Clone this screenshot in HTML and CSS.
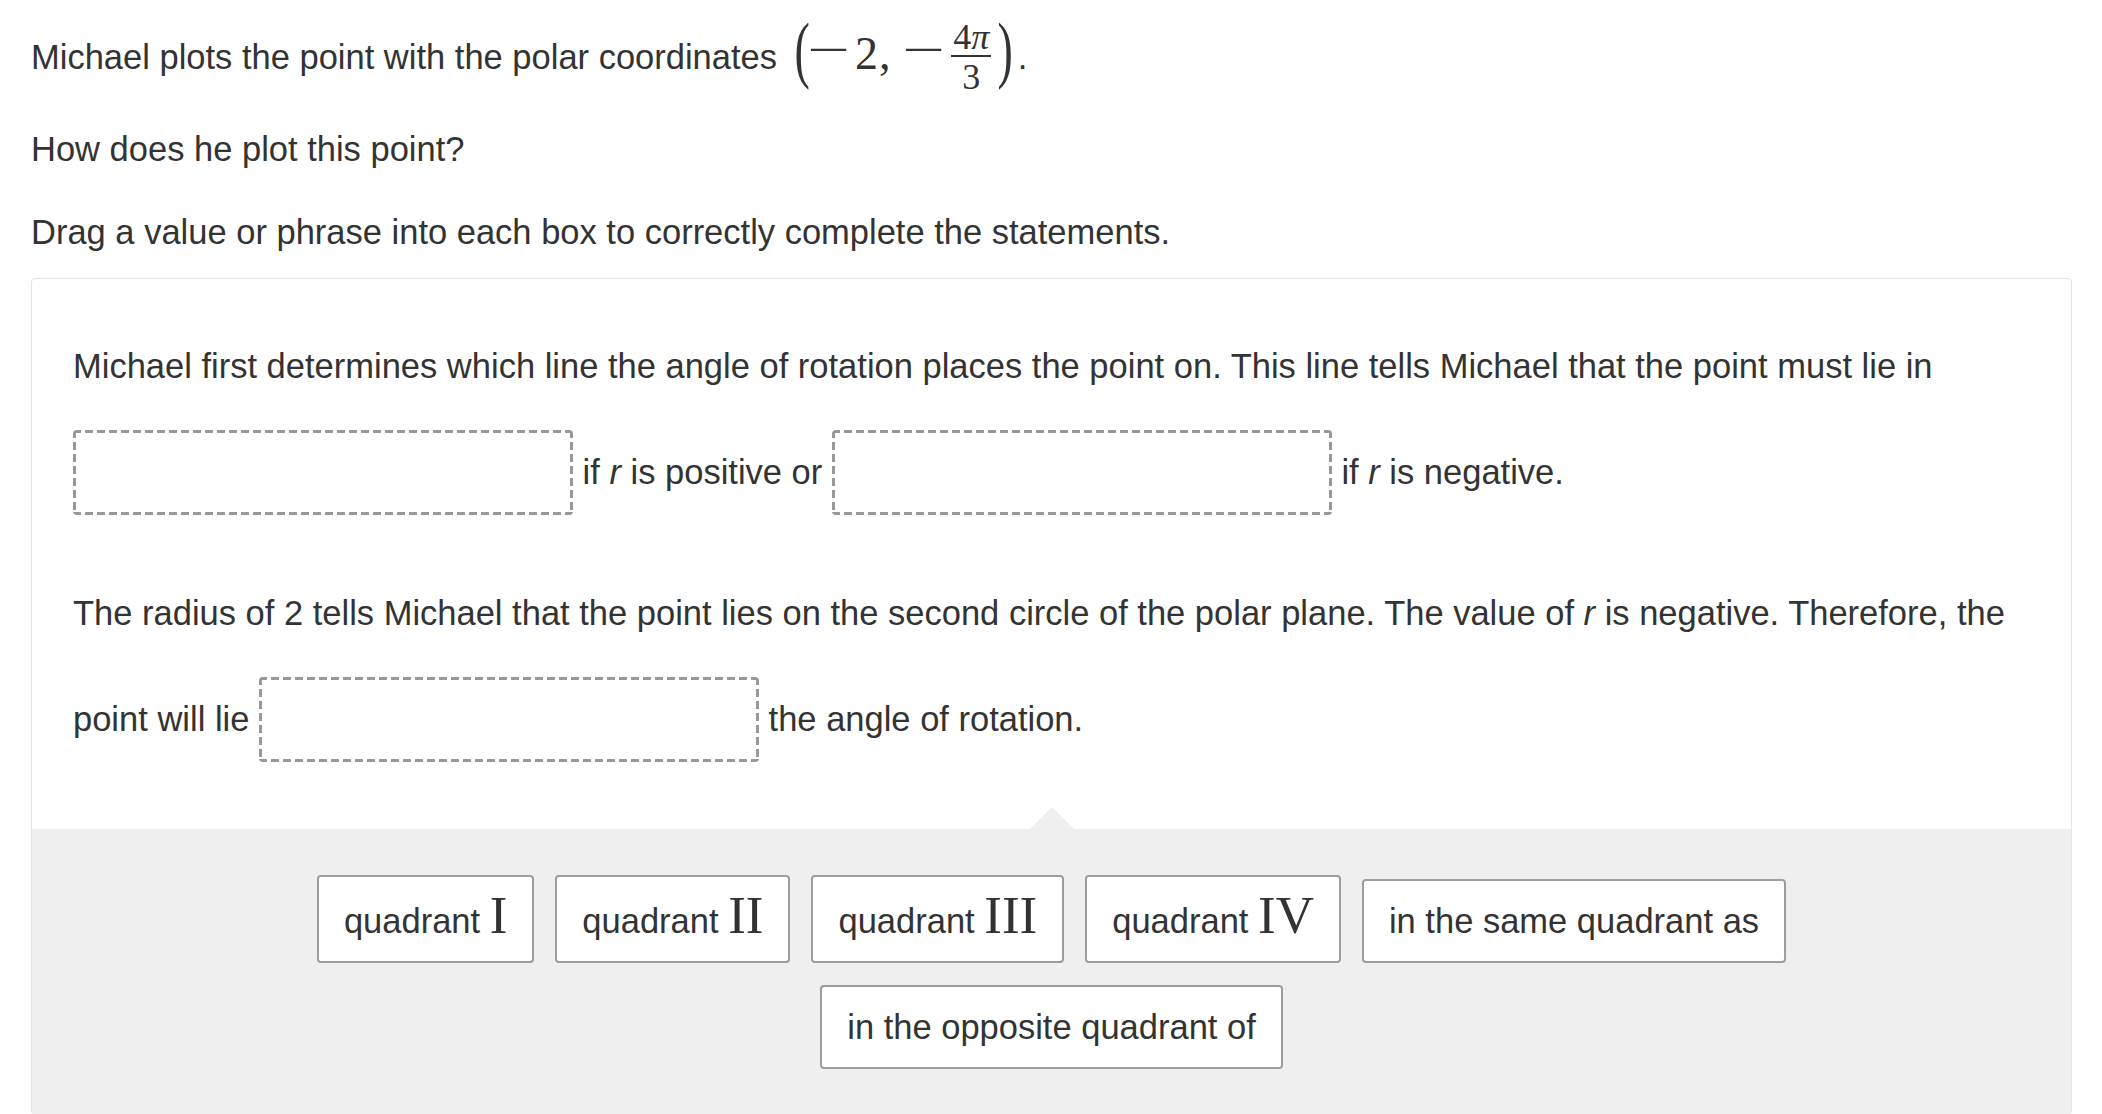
FILE: index.html
```html
<!DOCTYPE html>
<html lang="en">
<head>
<meta charset="utf-8">
<title>Polar coordinates</title>
<link rel="stylesheet" href="styles.css">
</head>
<body>
<div class="page">
  <p class="lead">Michael plots the point with the polar coordinates <span class="math"><span class="paren lp">(</span><span class="mo m1">−</span><span class="mn">2</span><span class="mn comma">,</span><span class="mo m2">−</span><span class="frac"><span class="num">4<span class="mi">π</span></span><span class="den">3</span></span><span class="paren rp">)</span></span>.</p>
  <p class="ask">How does he plot this point?</p>
  <p class="instr">Drag a value or phrase into each box to correctly complete the statements.</p>
  <div class="card">
    <div class="stmts">
      <p class="stmt">Michael first determines which line the angle of rotation places the point on. This line tells Michael that the point must lie in <span class="drop"></span> if <i>r</i> is positive or <span class="drop"></span> if <i>r</i> is negative.</p>
      <p class="stmt">The radius of 2 tells Michael that the point lies on the second circle of the polar plane. The value of <i>r</i> is negative. Therefore, the point will lie <span class="drop"></span> the angle of rotation.</p>
    </div>
    <div class="bank">
      <div class="chip">quadrant <span class="rn">I</span></div>
      <div class="chip">quadrant <span class="rn">II</span></div>
      <div class="chip">quadrant <span class="rn">III</span></div>
      <div class="chip">quadrant <span class="rn">IV</span></div>
      <div class="chip">in the same quadrant as</div>
      <div class="chip">in the opposite quadrant of</div>
    </div>
  </div>
</div>
</body>
</html>
```

FILE: styles.css
```css
html, body {
  margin: 0;
  padding: 0;
  background: #ffffff;
}

body {
  font-family: "Liberation Sans", Arial, Helvetica, sans-serif;
  font-size: 34.5px;
  line-height: 48px;
  color: #333333;
}

.page {
  padding: 19px 30px 0 31px;
}

p {
  margin: 0;
}

.lead {
  margin-bottom: 30px;
}

.ask {
  margin-bottom: 34.5px;
}

.instr {
  margin-bottom: 22px;
}

/* ---------- inline math ---------- */
.math {
  font-family: "Liberation Serif", "Times New Roman", serif;
  font-size: 46px;
  white-space: nowrap;
}

.paren {
  display: inline-block;
  font-size: 46px;
  line-height: 40px;
  transform-origin: 50% 24px;
  transform: translateY(-2px) scaleY(1.6);
}

.lp {
  margin-left: 8px;
  margin-right: 4px;
}

.rp {
  margin-left: 6px;
  margin-right: 5px;
}

.mo {
  display: inline-block;
  transform: translateY(-4px) scaleX(1.65);
}

.m1 {
  margin: 0 13px 0 2px;
}

.m2 {
  margin: 0 9px 0 21px;
}

.comma {
  margin-left: 1px;
}

.frac {
  display: inline-block;
  vertical-align: -20px;
  font-size: 36px;
  line-height: 36px;
  text-align: center;
  margin-left: 5px;
}

.num {
  display: block;
  padding: 0 2px;
  border-bottom: 2px solid #333333;
}

.mi {
  font-style: italic;
}

.den {
  display: block;
  padding-top: 2px;
}

/* ---------- card ---------- */
.card {
  border: 1px solid #e4e4e4;
  border-radius: 4px;
}

.stmts {
  padding: 63px 41px 26.5px;
}

.stmt + .stmt {
  margin-top: 34.5px;
}

.drop {
  display: inline-block;
  box-sizing: border-box;
  width: 500px;
  height: 85px;
  margin: 40px 0;
  vertical-align: -71px;
  border-radius: 4px;
  background:
    repeating-linear-gradient(90deg, #989898 0 8px, transparent 8px 12px) left top / 100% 3px no-repeat,
    repeating-linear-gradient(90deg, #989898 0 8px, transparent 8px 12px) left bottom / 100% 3px no-repeat,
    repeating-linear-gradient(180deg, #989898 0 8px, transparent 8px 12px) left top / 3px 100% no-repeat,
    repeating-linear-gradient(180deg, #989898 0 8px, transparent 8px 12px) right top / 3px 100% no-repeat;
}

/* ---------- answer bank ---------- */
.bank {
  position: relative;
  background: #efefef;
  padding: 46px 200px 45px;
  display: flex;
  flex-wrap: wrap;
  justify-content: center;
  align-items: baseline;
  gap: 22px 21px;
}

.bank::before {
  content: "";
  position: absolute;
  top: -22px;
  left: 50%;
  margin-left: -22px;
  width: 0;
  height: 0;
  border-left: 22px solid transparent;
  border-right: 22px solid transparent;
  border-bottom: 22px solid #efefef;
}

.chip {
  background: #ffffff;
  border: 2px solid #9d9d9d;
  border-radius: 4px;
  padding: 16px 25px;
  line-height: 48px;
  white-space: nowrap;
}

.rn {
  font-family: "Liberation Serif", "Times New Roman", serif;
  font-size: 53px;
  line-height: 45px;
}
```
